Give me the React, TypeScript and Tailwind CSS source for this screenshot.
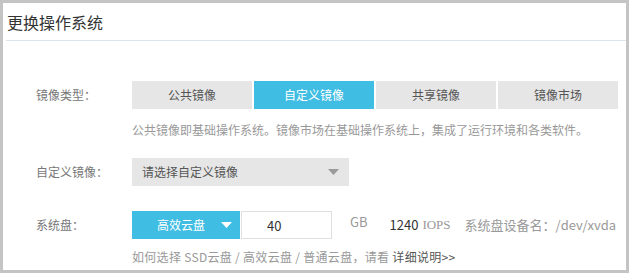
import React, { useState } from 'react';

const font = { fontFamily: '"Noto Sans CJK SC", "Noto Sans", sans-serif' };

const tabs = ['公共镜像', '自定义镜像', '共享镜像', '镜像市场'];

const Caret = ({ color }: { color: string }) => (
    <svg width="11" height="6" viewBox="0 0 11 6">
        <path d="M0 0 L11 0 L5.5 6 Z" fill={color} />
    </svg>
);

export default function App() {
    const [active, setActive] = useState(1);
    const [size, setSize] = useState('40');

    return (
        <div
            className="w-[629px] h-[273px] border-[3px] border-[#c4c4c4] bg-white text-[12px] text-[#555] overflow-hidden"
            style={font}
        >
            <div className="ml-[3px] h-[38px] border-b border-[#d9e6f0] flex items-center pl-[1px] text-[16px] text-[#333]">
                更换操作系统
            </div>

            <div className="pl-[33px]">
                {/* image type */}
                <div className="flex items-center mt-[40px]">
                    <div className="w-[96px] text-[#777]">镜像类型：</div>
                    <div className="flex gap-[2px]">
                        {tabs.map((t, i) => (
                            <button
                                key={t}
                                onClick={() => setActive(i)}
                                className={`w-[120px] h-[28px] flex items-center justify-center ${
                                    i === active ? 'bg-[#3fbde3] text-white' : 'bg-[#e6e6e6] text-[#555]'
                                }`}
                            >
                                {t}
                            </button>
                        ))}
                    </div>
                </div>
                <div className="ml-[96px] mt-[12px] leading-[18px] text-[#999]">
                    公共镜像即基础操作系统。镜像市场在基础操作系统上，集成了运行环境和各类软件。
                </div>

                {/* custom image */}
                <div className="flex items-center mt-[19px]">
                    <div className="w-[96px] text-[#777]">自定义镜像：</div>
                    <div className="w-[217px] h-[28px] bg-[#e6e6e6] flex items-center justify-between pl-[10px] pr-[10px]">
                        <span className="text-[#555]">请选择自定义镜像</span>
                        <Caret color="#9a9a9a" />
                    </div>
                </div>

                {/* system disk */}
                <div className="flex items-center mt-[25px]">
                    <div className="w-[96px] text-[#777]">系统盘：</div>
                    <div className="w-[108px] h-[28px] bg-[#3fbde3] text-white flex items-center pl-[25px] pr-[8px]">
                        <span className="flex-1">高效云盘</span>
                        <Caret color="#ffffff" />
                    </div>
                    <input
                        value={size}
                        onChange={e => setSize(e.target.value)}
                        className="ml-[1px] w-[91px] h-[28px] border border-[#e0e0e0] pl-[25px] text-[13px] text-[#333] outline-none"
                    />
                    <span className="ml-[18px] -mt-[6px] text-[#999] text-[13px]">GB</span>
                    <span className="ml-[22px] text-[13px] text-[#333]">1240</span>
                    <span
                        className="ml-[4px] text-[13px] text-[#999]"
                        style={{ fontFamily: '"Liberation Serif", serif' }}
                    >
                        IOPS
                    </span>
                    <span className="ml-[14px] text-[13px] text-[#999]">系统盘设备名：/dev/xvda</span>
                </div>
                <div className="ml-[96px] mt-[9px] leading-[18px] text-[#999] tracking-[0.3px]">
                    如何选择 SSD云盘 / 高效云盘 / 普通云盘，请看 <span className="text-[#555]">详细说明&gt;&gt;</span>
                </div>
            </div>
        </div>
    );
}
